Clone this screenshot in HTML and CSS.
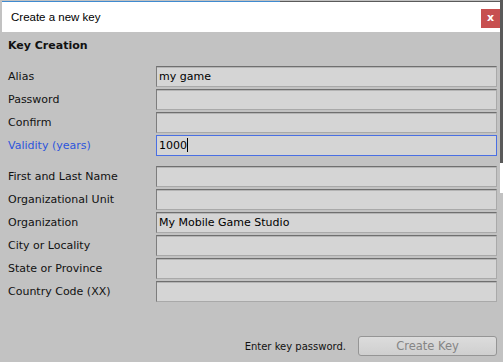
FILE: index.html
```html
<!DOCTYPE html>
<html lang="en">
<head>
  <meta charset="UTF-8" />
  <meta name="viewport" content="width=device-width, initial-scale=1.0" />
  <title>Create a new key</title>
  <link rel="stylesheet" href="styles.css">
</head>
<body>
  <div class="screen">
    <div class="window">
      <div class="topline"></div>
      <div class="titlebar">
        <span class="title">Create a new key</span>
        <span class="close">x</span>
      </div>

      <div class="content">
        <h1 class="section">Key Creation</h1>

        <!-- password block -->
        <div class="group">
          <div class="row"><label>Alias</label><div class="field">my game</div></div>
          <div class="row"><label>Password</label><div class="field"></div></div>
          <div class="row"><label>Confirm</label><div class="field"></div></div>
          <div class="row focused"><label>Validity (years)</label><div class="field">1000<span class="caret"></span></div></div>
        </div>

        <!-- identity block -->
        <div class="group">
          <div class="row"><label>First and Last Name</label><div class="field"></div></div>
          <div class="row"><label>Organizational Unit</label><div class="field"></div></div>
          <div class="row"><label>Organization</label><div class="field">My Mobile Game Studio</div></div>
          <div class="row"><label>City or Locality</label><div class="field"></div></div>
          <div class="row"><label>State or Province</label><div class="field"></div></div>
          <div class="row"><label>Country Code (XX)</label><div class="field"></div></div>
        </div>

        <div class="footer">
          <span class="hint">Enter key password.</span>
          <button class="create" disabled>Create Key</button>
        </div>
      </div>
    </div>
    <div class="desktop"></div>
  </div>
</body>
</html>
```

FILE: styles.css
```css
body {
  margin: 0;
  padding: 0;
  background-color: #c2c2c2;
  font-family: "DejaVu Sans", Verdana, sans-serif;
  font-size: 11px;
  color: #111;
}
.screen {
  display: flex;
  width: 503px;
  height: 362px;
  overflow: hidden;
}
.window {
  width: 500px;
  height: 362px;
  display: flex;
  flex-direction: column;
  background: #c2c2c2;
}
.desktop {
  width: 3px;
  background: linear-gradient(#5a5a5a 163px, #ffffff 163px, #ffffff 193px, #c2c2c2 193px);
}
.topline {
  height: 1px;
  margin-top: 1px;
  background: linear-gradient(to right, #c2c2c2 2px, #3f8ad0 2px, #3f8ad0 280px, #5a5a5a 280px);
}
.titlebar {
  height: 30px;
  margin-left: 2px;
  background: white;
  display: flex;
  align-items: center;
  justify-content: space-between;
}
.title {
  font-family: "Liberation Sans", Arial, sans-serif;
  font-size: 11.5px;
  color: #000;
  margin-left: 9px;
}
.close {
  width: 19px;
  height: 19px;
  margin-top: 2px;
  background: #c75050;
  color: white;
  font-weight: bold;
  font-size: 11px;
  line-height: 17px;
  text-align: center;
}
.content {
  flex: 1;
  display: flex;
  flex-direction: column;
  padding: 4px 3px 6px 8px;
}
.section {
  margin: 0;
  font-size: 11px;
  font-weight: bold;
  line-height: 20px;
  color: #111;
}
.group {
  display: flex;
  flex-direction: column;
  gap: 2px;
  margin-top: 10px;
}
.row {
  display: flex;
  align-items: center;
}
.row label {
  width: 148px;
  flex-shrink: 0;
}
.field {
  flex: 1;
  height: 19px;
  line-height: 19px;
  padding-left: 2px;
  background: #d5d5d5;
  border: 1px solid;
  border-color: #6f6f6f #a9a9a9 #a9a9a9 #7d7d7d;
  box-shadow: inset 0 1px 0 #b4b4b4;
  color: #000;
  white-space: nowrap;
}
.row.focused label {
  color: #2d55dc;
}
.row.focused .field {
  border-color: #4a6fe3;
  box-shadow: none;
}
.caret {
  display: inline-block;
  width: 1px;
  height: 14px;
  background: #000;
  vertical-align: -3px;
}
.footer {
  margin-top: auto;
  display: flex;
  align-items: center;
  justify-content: flex-end;
  gap: 12px;
}
.hint {
  font-size: 10px;
  color: #111;
}
.create {
  width: 139px;
  height: 20px;
  padding: 0;
  font-family: "DejaVu Sans", Verdana, sans-serif;
  font-size: 11.5px;
  color: #858585;
  background: linear-gradient(#dcdcdc, #cfcfcf);
  border: 1px solid #959595;
  border-radius: 3px;
}
```
